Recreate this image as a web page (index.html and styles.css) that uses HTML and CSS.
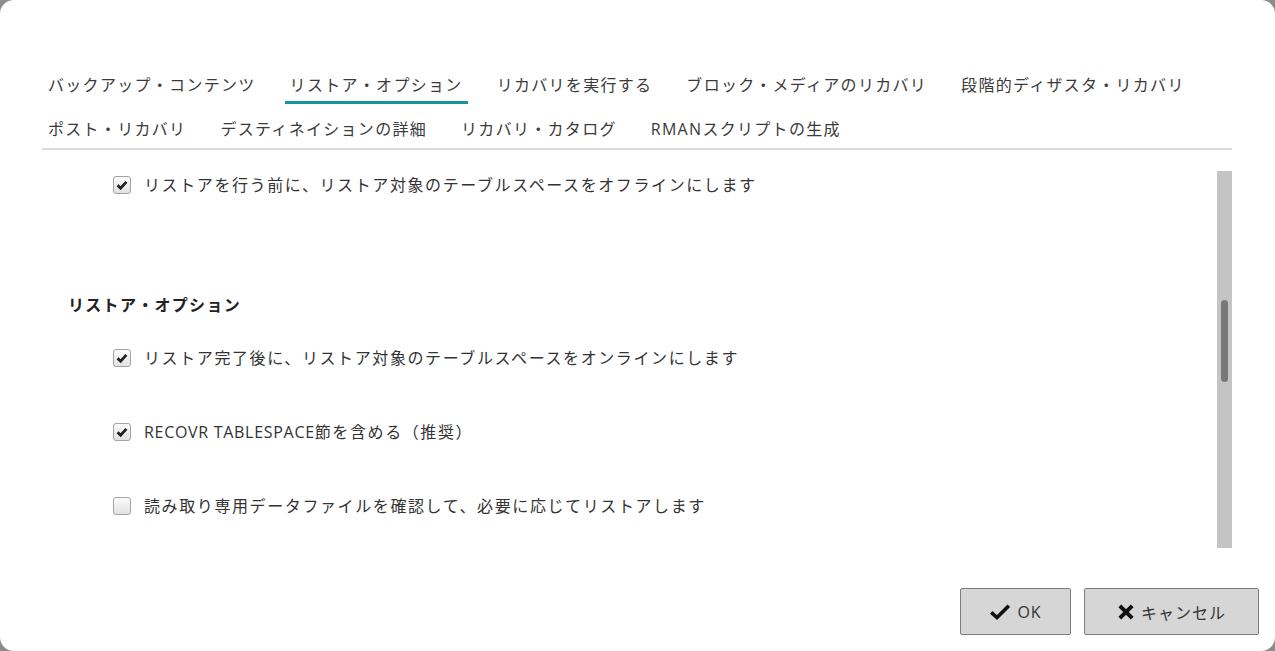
FILE: index.html
```html
<!DOCTYPE html>
<html lang="ja">
<head>
    <meta charset="UTF-8">
    <title>リストア・オプション</title>
    <link rel="stylesheet" href="styles.css">
</head>
<body>

<div class="dialog">
    <!-- Tabs -->
    <nav class="tabs">
        <div class="tab-row">
            <span class="tab">バックアップ・コンテンツ</span>
            <span class="tab active">リストア・オプション</span>
            <span class="tab">リカバリを実行する</span>
            <span class="tab">ブロック・メディアのリカバリ</span>
            <span class="tab">段階的ディザスタ・リカバリ</span>
        </div>
        <div class="tab-row">
            <span class="tab">ポスト・リカバリ</span>
            <span class="tab">デスティネイションの詳細</span>
            <span class="tab">リカバリ・カタログ</span>
            <span class="tab">RMANスクリプトの生成</span>
        </div>
    </nav>

    <!-- Scrolling panel -->
    <div class="panel">
        <div class="panel-body">
            <label class="option first">
                <span class="box"><svg viewBox="0 0 16 16"><path d="M3.6 8.2 L6.6 11.2 L12.4 4.9" /></svg></span>
                <span class="label">リストアを行う前に、リストア対象のテーブルスペースをオフラインにします</span>
            </label>

            <h3 class="section-title">リストア・オプション</h3>

            <label class="option">
                <span class="box"><svg viewBox="0 0 16 16"><path d="M3.6 8.2 L6.6 11.2 L12.4 4.9" /></svg></span>
                <span class="label">リストア完了後に、リストア対象のテーブルスペースをオンラインにします</span>
            </label>
            <label class="option">
                <span class="box"><svg viewBox="0 0 16 16"><path d="M3.6 8.2 L6.6 11.2 L12.4 4.9" /></svg></span>
                <span class="label"><span class="latin">RECOVR TABLESPACE</span>節を含める（推奨）</span>
            </label>
            <label class="option">
                <span class="box"></span>
                <span class="label">読み取り専用データファイルを確認して、必要に応じてリストアします</span>
            </label>
        </div>
        <div class="scrollbar">
            <div class="thumb"></div>
        </div>
    </div>

    <!-- Buttons -->
    <div class="actions">
        <button class="btn btn-ok">
            <svg viewBox="0 0 22 18" class="icon icon-check"><path d="M2.2 9.4 L8 14.6 L19.8 2.8" /></svg>OK
        </button>
        <button class="btn btn-cancel">
            <svg viewBox="0 0 18 18" class="icon icon-x"><path d="M2.8 2.8 L15.2 15.2 M15.2 2.8 L2.8 15.2" /></svg>キャンセル
        </button>
    </div>
</div>

</body>
</html>
```

FILE: styles.css
```css
html, body {
    margin: 0;
    padding: 0;
    height: 100%;
}

body {
    background-color: #8c8c8c;
    font-family: "Open Sans", "Noto Sans CJK JP", sans-serif;
    color: #333;
    overflow: hidden;
}

.dialog {
    width: 1275px;
    height: 651px;
    box-sizing: border-box;
    background-color: #fff;
    border-radius: 14px;
    padding-top: 73px;
    display: flex;
    flex-direction: column;
}

/* tabs */
.tabs {
    margin: 0 43px 0 42px;
    padding-left: 1px;
    border-bottom: 2px solid #dcdcdc;
}

.tab-row {
    display: flex;
    gap: 24px;
    margin-bottom: 13px;
}

.tab-row:last-child {
    margin-bottom: 0;
}

.tab {
    font-size: 16px;
    line-height: 24px;
    letter-spacing: 1.3px;
    padding: 0 5px 4px;
    border-bottom: 3px solid transparent;
    color: #3a3a3a;
    white-space: nowrap;
}

.tab.active {
    border-bottom-color: #17939b;
}

/* panel */
.panel {
    height: 398px;
    display: flex;
    margin: 0 43px 0 42px;
}

.panel-body {
    flex: 1;
    overflow: hidden;
    padding-left: 26px;
}

.option {
    display: flex;
    align-items: center;
    gap: 13px;
    margin-left: 45px;
    font-size: 16px;
    line-height: 24px;
    height: 24px;
    margin-bottom: 50px;
    letter-spacing: 1.6px;
    color: #333;
    white-space: nowrap;
}

.option .latin {
    letter-spacing: 0.7px;
}

.option.first {
    margin-top: 23px;
    margin-bottom: 0;
}

.box {
    width: 18px;
    height: 18px;
    box-sizing: border-box;
    border: 1px solid #a3a3a3;
    border-radius: 3px;
    background: linear-gradient(#fbfbfb, #e2e2e2);
    flex-shrink: 0;
}

.box svg {
    display: block;
    width: 16px;
    height: 16px;
    fill: none;
    stroke: #222;
    stroke-width: 2.8;
}

.section-title {
    font-size: 16px;
    line-height: 24px;
    font-weight: bold;
    letter-spacing: 1.3px;
    margin: 96px 0 29px;
    color: #222;
}

/* fake scrollbar */
.scrollbar {
    width: 15px;
    margin-top: 21px;
    height: 377px;
    background-color: #c4c4c4;
    display: flex;
    justify-content: center;
    padding-top: 129px;
    box-sizing: border-box;
}

.thumb {
    width: 7px;
    height: 82px;
    border-radius: 4px;
    background-color: #787878;
}

/* buttons */
.actions {
    display: flex;
    justify-content: flex-end;
    gap: 13px;
    padding: 40px 16px 0 0;
}

.btn {
    height: 47px;
    display: flex;
    align-items: center;
    justify-content: center;
    gap: 6px;
    background-color: #d6d6d6;
    border: 1px solid #7d7d7d;
    border-radius: 2px;
    font-family: "Open Sans", "Noto Sans CJK JP", sans-serif;
    font-size: 16px;
    letter-spacing: 1px;
    color: #333;
    padding: 0;
}

.btn-ok {
    width: 111px;
}

.btn-cancel {
    width: 175px;
}

.icon {
    fill: none;
    stroke: #111;
}

.icon-check {
    width: 22px;
    height: 18px;
    stroke-width: 3.6;
}

.icon-x {
    width: 18px;
    height: 18px;
    stroke-width: 4;
}
```
